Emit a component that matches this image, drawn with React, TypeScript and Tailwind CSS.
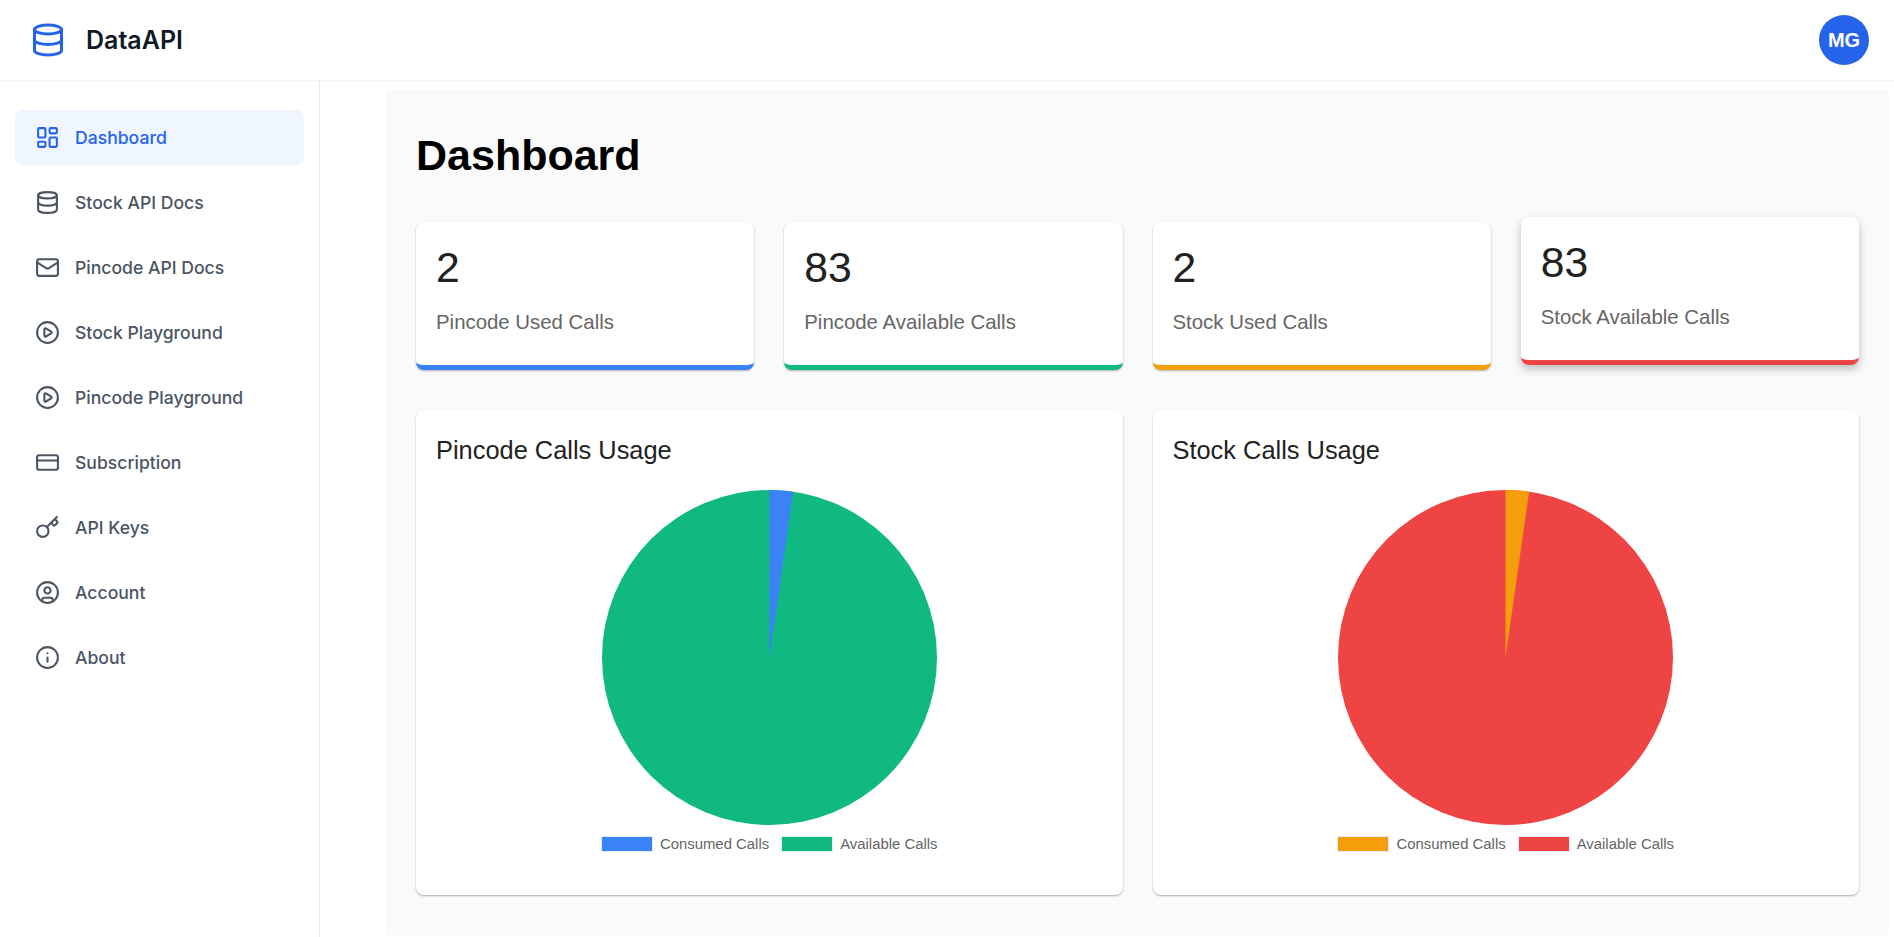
import { CirclePlay, CircleUser, CreditCard, Database, Info, Key, LayoutDashboard, Mail } from "lucide-react";

const nav = [
  { label: "Dashboard", icon: LayoutDashboard, active: true },
  { label: "Stock API Docs", icon: Database },
  { label: "Pincode API Docs", icon: Mail },
  { label: "Stock Playground", icon: CirclePlay },
  { label: "Pincode Playground", icon: CirclePlay },
  { label: "Subscription", icon: CreditCard },
  { label: "API Keys", icon: Key },
  { label: "Account", icon: CircleUser },
  { label: "About", icon: Info },
];

function Stat({ value, label, bar, lifted }: { value: string; label: string; bar: string; lifted?: boolean }) {
  return (
    <div
      className={`h-[148px] rounded-lg bg-white px-5 pt-[22px] border-b-[5px] ${bar} ${
        lifted ? "-translate-y-[5px] shadow-[0_4px_8px_rgba(0,0,0,0.25)]" : "shadow-[0_1px_2px_rgba(0,0,0,0.3)]"
      }`}
    >
      <div className="text-[42.7px] leading-[46px] text-[#222222]">{value}</div>
      <div className="mt-[20px] text-[20.4px] leading-[24px] text-[#666666]">{label}</div>
    </div>
  );
}

function PieCard({ title, used, rest, usedBg, restBg }: { title: string; used: string; rest: string; usedBg: string; restBg: string }) {
  return (
    <div className="h-[485px] rounded-lg bg-white px-5 pt-[25px] shadow-[0_1px_2px_rgba(0,0,0,0.3)]">
      <h2 className="text-[25.4px] leading-[30px] text-[#222222]">{title}</h2>
      <div className="mt-[25px] flex justify-center">
        <svg width="335" height="335" viewBox="0 0 335 335">
          <circle cx="167.5" cy="167.5" r="167.5" fill={rest} />
          <path d="M167.5 167.5 L167.5 0 A167.5 167.5 0 0 1 191.1 1.67 Z" fill={used} />
        </svg>
      </div>
      <div className="mt-[11px] flex items-center justify-center text-[14.9px] leading-[16px] text-[#666666]">
        <span className={`h-4 w-[52px] border border-[#e4ecf5] ${usedBg}`} />
        <span className="ml-[7px]">Consumed Calls</span>
        <span className={`ml-[12px] h-4 w-[52px] border border-[#e4ecf5] ${restBg}`} />
        <span className="ml-[7px]">Available Calls</span>
      </div>
    </div>
  );
}

export default function App() {
  return (
    <div className="flex h-screen flex-col overflow-hidden bg-white font-['Liberation_Sans',Arial,sans-serif]">
      <header className="flex h-[81px] shrink-0 items-center justify-between border-b border-[#f3f4f6] pl-[30px] pr-[25px]">
        <div className="flex items-center gap-5">
          <Database size={36} strokeWidth={2} className="text-[#2563eb]" />
          <span className="pt-[2px] font-['Inter',sans-serif] text-[25px] font-semibold text-[#111827]">DataAPI</span>
        </div>
        <div className="flex h-[50px] w-[50px] items-center justify-center rounded-full bg-[#2563eb] text-[20px] font-bold text-white">
          MG
        </div>
      </header>
      <div className="flex min-h-0 flex-1">
        <aside className="w-[320px] shrink-0 border-r border-[#e5e7eb] px-[15px] pt-[29px] font-['Inter',sans-serif]">
          <nav className="flex flex-col gap-[10px]">
            {nav.map(({ label, icon: Icon, active }) => (
              <div
                key={label}
                className={`flex h-[55px] items-center gap-[15px] rounded-lg px-5 text-[17.6px] font-medium ${
                  active ? "bg-[#eff6ff] text-[#2563eb]" : "text-[#4b5563]"
                }`}
              >
                <Icon size={25} strokeWidth={2} />
                <span className="pt-[2px]">{label}</span>
              </div>
            ))}
          </nav>
        </aside>
        <main className="min-w-0 flex-1 pb-[2px] pl-[66px] pr-[5px] pt-[9px]">
          <div className="h-full bg-[#fafafa] p-[30px]">
            <h1 className="mt-[10px] text-[43px] font-bold leading-[50px] text-black">Dashboard</h1>
            <div className="mt-[42px] grid grid-cols-4 gap-[30px]">
              <Stat value="2" label="Pincode Used Calls" bar="border-[#3b82f6]" />
              <Stat value="83" label="Pincode Available Calls" bar="border-[#10b981]" />
              <Stat value="2" label="Stock Used Calls" bar="border-[#f59e0b]" />
              <Stat value="83" label="Stock Available Calls" bar="border-[#ef4444]" lifted />
            </div>
            <div className="mt-[40px] grid grid-cols-2 gap-[30px]">
              <PieCard title="Pincode Calls Usage" used="#3b82f6" rest="#10b981" usedBg="bg-[#3b82f6]" restBg="bg-[#10b981]" />
              <PieCard title="Stock Calls Usage" used="#f59e0b" rest="#ef4444" usedBg="bg-[#f59e0b]" restBg="bg-[#ef4444]" />
            </div>
          </div>
        </main>
      </div>
    </div>
  );
}
